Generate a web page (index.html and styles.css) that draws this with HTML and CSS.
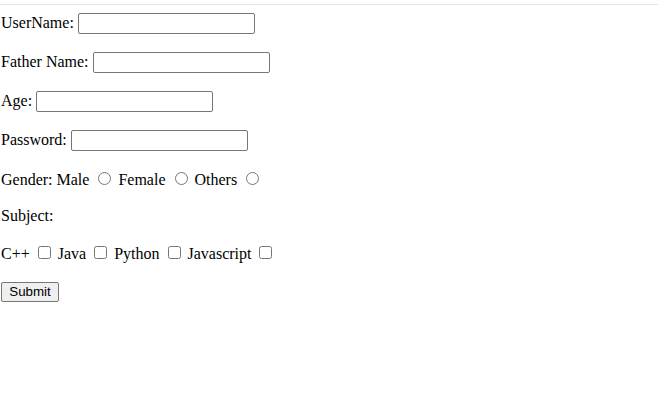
FILE: index.html
```html
<!DOCTYPE html>
<html>
<head>
<meta charset="utf-8">
<title>Form</title>
<link rel="stylesheet" href="styles.css">
</head>
<body>
<div class="topline"></div>
<form class="form">
  <p class="row row-input first">UserName: <input type="text" class="field"></p>
  <p class="row row-input">Father Name: <input type="text" class="field"></p>
  <p class="row row-input">Age: <input type="text" class="field"></p>
  <p class="row row-input">Password: <input type="password" class="field"></p>
  <p class="row row-radio">Gender: Male <input type="radio" name="g" class="radio"> Female <input type="radio" name="g" class="radio"> Others <input type="radio" name="g" class="radio"></p>
  <p class="row row-text">Subject:</p>
  <p class="row row-check">C++ <input type="checkbox" class="check"> Java <input type="checkbox" class="check"> Python <input type="checkbox" class="check"> Javascript <input type="checkbox" class="check"></p>
  <p class="row row-button"><button type="button" class="submit">Submit</button></p>
</form>
</body>
</html>
```

FILE: styles.css
```css
html, body {
  margin: 0;
  padding: 0;
  background: #fff;
}
body {
  font-family: "Liberation Serif", "Times New Roman", serif;
  font-size: 16px;
  color: #000;
  padding-left: 1px;
}
.topline {
  margin-top: 4px;
  margin-left: -1px;
  height: 0;
  border-top: 1px solid #e3e3e3;
}
.form {
  margin: 0;
}
.row {
  margin: 16px 0;
}
.row.first {
  margin-top: 6px;
}
.row-input {
  line-height: 23px;
}
.row-radio {
  margin-top: 17px;
  line-height: 23px;
}
.row-text {
  line-height: 18px;
  margin-bottom: 17px;
}
.row-check {
  line-height: 23px;
  margin-bottom: 14px;
}
.row-button {
  margin-top: 14px;
  line-height: 23px;
}
.field {
  box-sizing: border-box;
  width: 177px;
  height: 21px;
  border: 1px solid #767676;
  border-radius: 2px;
  padding: 1px 2px;
  font-family: "Liberation Sans", Arial, sans-serif;
  font-size: 13.33px;
  background: #fff;
  vertical-align: baseline;
}
.radio, .check {
  width: 13px;
  height: 13px;
  margin: 3px 3px 0 5px;
}
.check {
  margin: 3px 3px 3px 4px;
}
.submit {
  box-sizing: border-box;
  font-family: "Liberation Sans", Arial, sans-serif;
  font-size: 13.33px;
  line-height: normal;
  color: #000;
  background: #efefef;
  border: 1px solid #767676;
  border-radius: 2px;
  padding: 1px 6px;
  height: 20px;
  width: 58px;
}
```
